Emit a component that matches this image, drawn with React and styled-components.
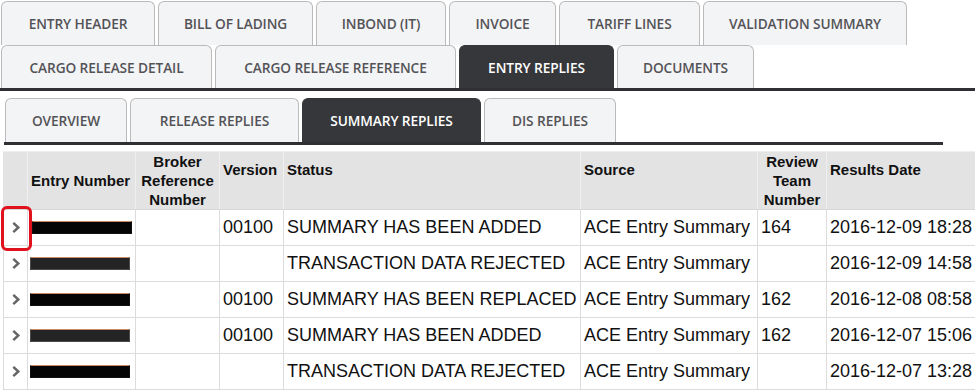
import React from "react";
import styled, { createGlobalStyle } from "styled-components";

const GlobalStyle = createGlobalStyle`
  html, body { margin: 0; padding: 0; background: #fff; overflow: hidden; }
  * { box-sizing: border-box; }
`;

const Page = styled.div`
  width: 975px;
  padding-top: 1px;
`;

const TabRow = styled.div`
  display: flex;
  gap: 3px;
  padding-left: ${(p) => p.$indent || 1}px;
  align-items: flex-end;
`;

const TabBar = styled.div`
  border-bottom: 3px solid #2f3033;
`;

const Tab = styled.div`
  height: ${(p) => p.$h || 43}px;
  padding: 0 20px;
  display: flex;
  align-items: center;
  justify-content: center;
  border: 1px solid ${(p) => (p.$active ? "#36373b" : "#bababa")};
  border-bottom: none;
  border-radius: 6px 6px 0 0;
  background: ${(p) => (p.$active ? "#36373b" : "#f3f4f6")};
  color: ${(p) => (p.$active ? "#ffffff" : "#535357")};
  font-family: "Open Sans", "Noto Sans", sans-serif;
  font-weight: 600;
  font-size: 13.7px;
  letter-spacing: -0.1px;
  white-space: nowrap;
  width: ${(p) => (p.$w ? `${p.$w}px` : "auto")};
`;

const SubTabs = styled.div`
  margin-top: 7px;
  margin-left: 4px;
  width: 939px;
  border-bottom: 3px solid #2f3033;
`;

const Table = styled.table`
  margin-top: 6px;
  margin-left: 3px;
  border-collapse: collapse;
  table-layout: fixed;
  width: 988px;
  font-family: "Liberation Sans", Arial, sans-serif;
  color: #111;
`;

const Th = styled.th`
  background: #e3e3e3;
  border: 1px solid #efefef;
  border-bottom: 1px solid #d8d8d8;
  font-size: 15px;
  font-weight: bold;
  line-height: 19px;
  height: 57px;
  padding: ${(p) => (p.$top ? "8px 3px 0" : "0 3px")};
  vertical-align: ${(p) => (p.$top ? "top" : "middle")};
  text-align: ${(p) => (p.$center ? "center" : "left")};
  &:first-child { border-left-color: #e3e3e3; }
`;

const Td = styled.td`
  border: 1px solid #dcdcdc;
  height: 36px;
  padding: 0 3px;
  font-size: 18px;
  white-space: nowrap;
  vertical-align: middle;
  position: relative;
`;

const ExpandCell = styled(Td)`
  padding: 0;
  text-align: center;
  svg { display: block; margin: 0 auto; }
`;

const Highlight = styled.div`
  position: absolute;
  top: -4px;
  bottom: -6px;
  left: -3px;
  right: -5px;
  border: 3px solid #e0101c;
  border-radius: 6px;
  pointer-events: none;
`;

const Redaction = styled.div`
  width: 100px;
  height: 13px;
  margin-left: ${(p) => (p.$first ? 1 : -1)}px;
  background: ${(p) => (p.$dark ? "#242424" : "#050505")};
  border: 1px solid ${(p) => (p.$dark ? "#4a4a4a" : "#111")};
  border-top: 1px solid #c98a62;
`;

const Chevron = () => (
  <svg width="10" height="13" viewBox="0 0 10 13">
    <polyline points="2.3,1.8 7.3,6.5 2.3,11.2" fill="none" stroke="#666666" strokeWidth="2.5" />
  </svg>
);

const rows = [
  { v: "00100", s: "SUMMARY HAS BEEN ADDED", r: "164", d: "2016-12-09 18:28", dark: false, hl: true },
  { v: "", s: "TRANSACTION DATA REJECTED", r: "", d: "2016-12-09 14:58", dark: true },
  { v: "00100", s: "SUMMARY HAS BEEN REPLACED", r: "162", d: "2016-12-08 08:58", dark: false },
  { v: "00100", s: "SUMMARY HAS BEEN ADDED", r: "162", d: "2016-12-07 15:06", dark: true },
  { v: "", s: "TRANSACTION DATA REJECTED", r: "", d: "2016-12-07 13:28", dark: false },
];

export default function App() {
  return (
    <Page>
      <GlobalStyle />
      <TabRow>
        <Tab $h={44} $w={154}>ENTRY HEADER</Tab>
        <Tab $h={44} $w={155}>BILL OF LADING</Tab>
        <Tab $h={44} $w={130}>INBOND (IT)</Tab>
        <Tab $h={44} $w={107}>INVOICE</Tab>
        <Tab $h={44} $w={141}>TARIFF LINES</Tab>
        <Tab $h={44} $w={204}>VALIDATION SUMMARY</Tab>
      </TabRow>
      <TabBar>
        <TabRow>
          <Tab $w={211}>CARGO RELEASE DETAIL</Tab>
          <Tab $w={241}>CARGO RELEASE REFERENCE</Tab>
          <Tab $w={155} $active>ENTRY REPLIES</Tab>
          <Tab $w={137}>DOCUMENTS</Tab>
        </TabRow>
      </TabBar>
      <SubTabs>
        <TabRow $indent={1}>
          <Tab $h={44} $w={122}>OVERVIEW</Tab>
          <Tab $h={44} $w={169}>RELEASE REPLIES</Tab>
          <Tab $h={44} $w={179} $active>SUMMARY REPLIES</Tab>
          <Tab $h={44} $w={132}>DIS REPLIES</Tab>
        </TabRow>
      </SubTabs>
      <Table>
        <colgroup>
          <col style={{ width: 24 }} />
          <col style={{ width: 108 }} />
          <col style={{ width: 84 }} />
          <col style={{ width: 64 }} />
          <col style={{ width: 297 }} />
          <col style={{ width: 177 }} />
          <col style={{ width: 69 }} />
          <col style={{ width: 165 }} />
        </colgroup>
        <thead>
          <tr>
            <Th />
            <Th>Entry Number</Th>
            <Th $center>Broker Reference Number</Th>
            <Th $top>Version</Th>
            <Th $top>Status</Th>
            <Th $top>Source</Th>
            <Th $center>Review Team Number</Th>
            <Th $top>Results Date</Th>
          </tr>
        </thead>
        <tbody>
          {rows.map((row, i) => (
            <tr key={i}>
              <ExpandCell>
                <Chevron />
                {row.hl && <Highlight />}
              </ExpandCell>
              <Td>
                <Redaction $dark={row.dark} $first={row.hl} />
              </Td>
              <Td />
              <Td>{row.v}</Td>
              <Td>{row.s}</Td>
              <Td>ACE Entry Summary</Td>
              <Td>{row.r}</Td>
              <Td>{row.d}</Td>
            </tr>
          ))}
        </tbody>
      </Table>
    </Page>
  );
}
